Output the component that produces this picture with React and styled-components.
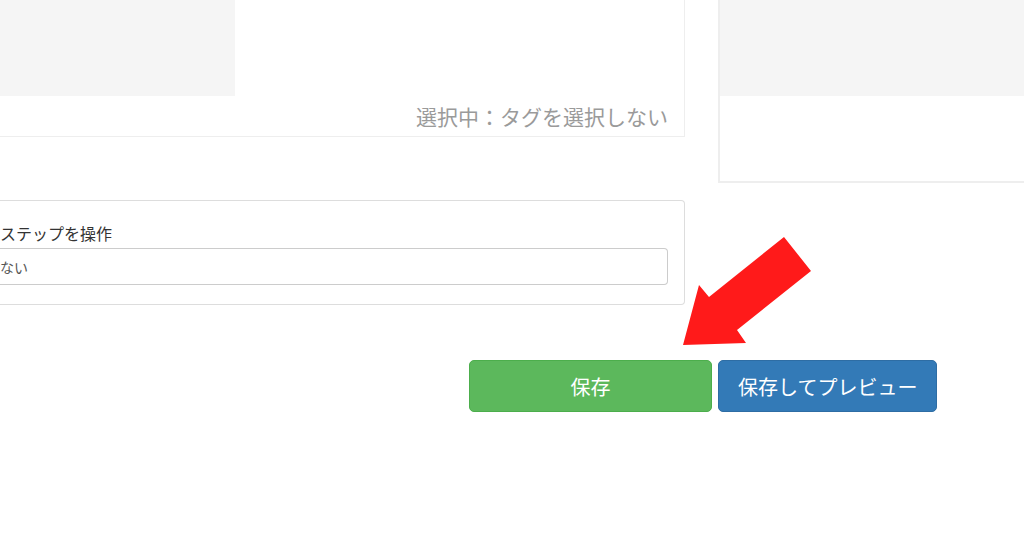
import React from 'react';
import styled, { createGlobalStyle } from 'styled-components';

const GlobalStyle = createGlobalStyle`
  html, body {
    margin: 0;
    padding: 0;
    background: #fff;
    overflow: hidden;
  }
  body {
    font-family: Meiryo, "Noto Sans CJK JP", "Noto Sans", sans-serif;
    color: #333;
  }
`;

const Page = styled.div`
  position: relative;
  width: 1024px;
  height: 538px;
`;

const TopRow = styled.div`
  display: flex;
  align-items: flex-start;
`;

const TagCard = styled.div`
  box-sizing: border-box;
  width: 685px;
  height: 137px;
  border-right: 1px solid #eee;
  border-bottom: 1px solid #eee;
`;

const Thumb = styled.div`
  width: ${({ $w }) => $w || '100%'};
  height: 96px;
  background: #f5f5f5;
`;

const Caption = styled.div`
  margin-top: 6px;
  padding-right: 16px;
  text-align: right;
  font-size: 21px;
  line-height: 28px;
  color: #9a9a9a;
`;

const SideCard = styled.div`
  box-sizing: border-box;
  flex: 1;
  height: 183px;
  margin-left: 33px;
  border-left: 2px solid #eee;
  border-bottom: 2px solid #eee;
`;

const StepCard = styled.div`
  box-sizing: border-box;
  width: 685px;
  height: 105px;
  margin-top: 17px;
  padding: 21px 16px 0 0;
  border: 1px solid #ddd;
  border-left: none;
  border-radius: 0 4px 4px 0;
`;

const Label = styled.div`
  font-size: 16px;
  line-height: 22px;
  margin-bottom: 4px;
  color: #333;
`;

const Select = styled.div`
  box-sizing: border-box;
  height: 37px;
  display: flex;
  align-items: center;
  border: 1px solid #ccc;
  border-left: none;
  border-radius: 0 4px 4px 0;
  font-size: 14px;
  color: #555;
`;

const ButtonRow = styled.div`
  display: flex;
  gap: 6px;
  margin-top: 55px;
  padding-left: 469px;
`;

const Button = styled.button`
  box-sizing: border-box;
  height: 52px;
  width: ${({ $w }) => $w || 'auto'};
  padding: 0 19px;
  border: 1px solid ${({ $variant }) => ($variant === 'save' ? '#4cae4c' : '#2e6da4')};
  border-radius: 5px;
  background: ${({ $variant }) => ($variant === 'save' ? '#5cb85c' : '#337ab7')};
  color: #fff;
  font-family: inherit;
  font-size: 20px;
  cursor: pointer;
`;

const Arrow = styled.svg`
  position: absolute;
  left: 0;
  top: 0;
  pointer-events: none;
`;

export default function App() {
  return (
    <Page>
      <GlobalStyle />
      <TopRow>
        <TagCard>
          <Thumb $w="235px" />
          <Caption>選択中：タグを選択しない</Caption>
        </TagCard>
        <SideCard>
          <Thumb />
        </SideCard>
      </TopRow>
      <StepCard>
        <Label>ステップを操作</Label>
        <Select>ない</Select>
      </StepCard>
      <ButtonRow>
        <Button $variant="save" $w="243px">保存</Button>
        <Button $variant="preview">保存してプレビュー</Button>
      </ButtonRow>
      <Arrow width="1024" height="538" viewBox="0 0 1024 538">
        <polygon
          points="683,345 699,285 709,297 784,237 811,271 737,330 746,343"
          fill="#ff1a1a"
        />
      </Arrow>
    </Page>
  );
}
